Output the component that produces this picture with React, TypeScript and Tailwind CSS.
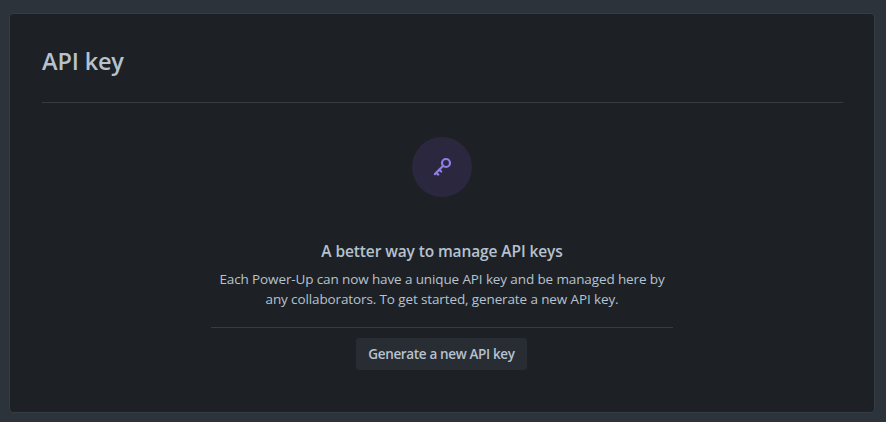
export default function App() {
  return (
    <main className="h-[422px] w-[886px] bg-[#2c333a] pt-[13px] pl-[9px] font-['Open_Sans','Noto_Sans',sans-serif] text-[#b6c2cf]">
      <section className="flex h-[400px] w-[866px] flex-col rounded-[4px] border border-[#343c44] bg-[#1d2125] pr-[31px] pl-[32px]">
        <h1 className="h-[89px] border-b border-[#343b41] pt-[31px] text-[23.5px] leading-[32px] font-semibold"><span className="inline-block w-max tracking-[-0.15px]">API key</span></h1>
        <div className="mr-auto ml-[169px] flex w-[462px] flex-col items-center">
          <div className="mt-[34px] flex h-[60px] w-[60px] items-center justify-center rounded-full bg-[#2b273f]">
            <svg width="24" height="24" viewBox="0 0 24 24" fill="none" stroke="#8f7ee7" strokeWidth="2.2" strokeLinecap="round"><circle cx="16" cy="8" r="4" /><path d="M13.2 10.8 4.9 19.1M9.3 14.7l1.9 1.8M6.2 17.8l2.1 1.8" /></svg>
          </div>
          <h2 className="mt-[44px] text-[15.5px] leading-[20px] font-semibold tracking-[-0.11px] whitespace-nowrap">A better way to manage API keys</h2>
          <p className="mt-[8px] h-[59px] w-full border-b border-[#343b41] text-center text-[13.5px] leading-[20px] tracking-[-0.12px]">
            <span className="block whitespace-nowrap">Each Power-Up can now have a unique API key and be managed here by</span>
            <span className="block whitespace-nowrap">any collaborators. To get started, generate a new API key.</span>
          </p>
          <button className="mt-[10px] mr-px h-[32px] w-[171px] rounded-[3px] bg-[#282d33] text-[13.5px] leading-[20px] font-semibold tracking-[-0.35px] whitespace-nowrap">Generate a new API key</button>
        </div>
      </section>
    </main>
  );
}
